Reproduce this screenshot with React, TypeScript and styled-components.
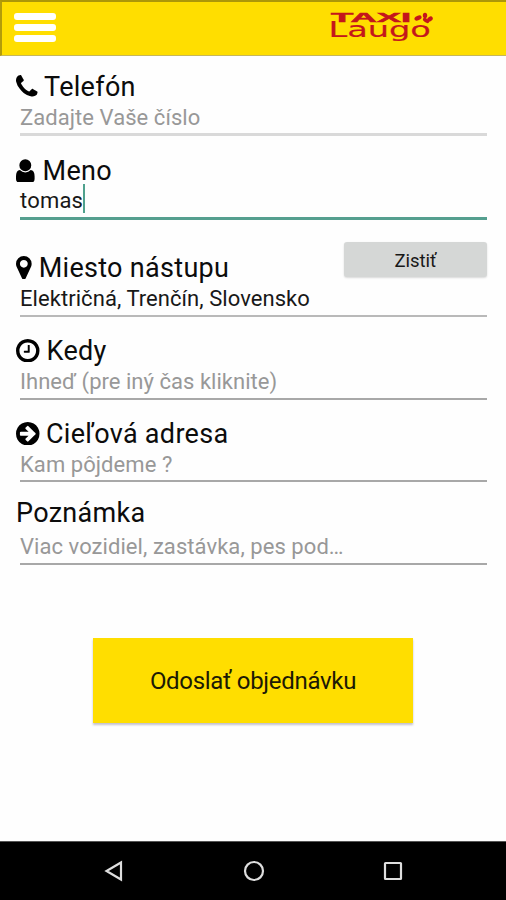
import React from "react";
import styled, { createGlobalStyle } from "styled-components";

const GlobalStyle = createGlobalStyle`
  * { box-sizing: border-box; }
  body { margin: 0; background: #fefefe; }
`;

const Screen = styled.div`
  width: 506px;
  height: 900px;
  display: flex;
  flex-direction: column;
  overflow: hidden;
  background: #fefefe;
  color: #0c0c0c;
  font-family: Roboto, "Liberation Sans", sans-serif;
`;

const TopBar = styled.header`
  height: 56px;
  flex: none;
  display: flex;
  justify-content: space-between;
  align-items: flex-start;
  padding: 9px 71px 0 12px;
  background: #ffde00;
  border-top: 2px solid #ad9708;
  border-left: 2px solid #b39c0a;
  border-bottom: 1px solid #c5b75c;
`;

const MenuButton = styled.button`
  width: 42px;
  height: 34px;
  padding: 2px 0 0;
  border: 0;
  background: none;
  display: flex;
  flex-direction: column;
  gap: 4px;
`;

const MenuBar = styled.span`
  width: 42px;
  height: 7px;
  border-radius: 3px;
  background: #fff;
`;

const Logo = styled.svg`
  width: 106px;
  height: 36px;
  display: block;
`;

const Form = styled.form`
  flex: 1;
  display: flex;
  flex-direction: column;
  padding: 15px 19px 0 16px;
`;

const Field = styled.section<{ $height: number }>`
  height: ${(p) => p.$height}px;
  flex: none;
`;

const LabelRow = styled.div`
  display: flex;
  justify-content: space-between;
  height: 33px;
`;

const Label = styled.label<{ $gap: number }>`
  display: flex;
  align-items: center;
  gap: ${(p) => p.$gap}px;
  height: 32px;
  font-size: 27px;
  line-height: 32px;
  letter-spacing: 0.3px;
  white-space: nowrap;
`;

const LabelIcon = styled.svg`
  height: 23.5px;
  flex: none;
  display: block;
  margin-top: -1.5px;
  fill: #000;
`;

const Value = styled.div<{ $muted?: boolean; $line: string; $weight: number; $area: number; $spacing: number; $top: number }>`
  margin-left: 4px;
  display: flex;
  align-items: flex-start;
  height: ${(p) => p.$area + p.$weight}px;
  padding-top: ${(p) => p.$top}px;
  border-bottom: ${(p) => p.$weight}px solid ${(p) => p.$line};
  color: ${(p) => (p.$muted ? "#989898" : "#181818")};
  font-size: 22px;
  line-height: 26px;
  letter-spacing: ${(p) => p.$spacing}px;
  white-space: pre;
`;

const Caret = styled.span`
  width: 2px;
  height: 29px;
  margin-top: -4px;
  background: #4fa18d;
`;

const LocateButton = styled.button`
  width: 143px;
  height: 35px;
  margin-top: -10px;
  border: 0;
  border-radius: 3px;
  background: #d5d7d6;
  box-shadow: 0 1px 2px rgba(0, 0, 0, 0.15);
  color: #181818;
  font: 18.5px Roboto, sans-serif;
  padding: 2px 0 0;
`;

const SubmitButton = styled.button`
  width: 320px;
  height: 85px;
  margin: 73px 0 0 77px;
  border: 0;
  background: #ffde00;
  box-shadow: 0 2px 2px rgba(60, 50, 90, 0.3);
  color: #1c1a05;
  font: 24px Roboto, sans-serif;
  letter-spacing: -0.3px;
  padding: 1px 0 0;
`;

const NavBar = styled.nav`
  height: 59px;
  flex: none;
  display: flex;
  justify-content: space-between;
  align-items: center;
  padding: 0 101px 0 102px;
  background: #000;
  border-top: 1px solid #555;
`;

const NavIcon = styled.svg`
  width: 24px;
  height: 24px;
  fill: none;
  stroke: #dedede;
  stroke-width: 2.2;
`;

const icons = {
  phone: {
    box: "192 128 1408 1536",
    d: "M1600 1240q0 27-10 70.5t-21 68.5q-21 50-122 106-94 51-186 51-27 0-53-3.5t-57.5-12.5-47-14.5-55.5-20.5-49-18q-98-35-175-83-127-79-264-216t-216-264q-48-77-83-175-3-9-18-49t-20.5-55.5-14.5-47-12.5-57.5-3.5-53q0-92 51-186 56-101 106-122 25-11 68.5-21t70.5-10q14 0 21 3 18 6 53 76 11 19 30 54t35 63.5 31 53.5q3 4 17.5 25t21.5 35.5 7 28.5q0 20-28.5 50t-62 55-62 53-28.5 46q0 9 5 22.5t8.5 20.5 14 24 11.5 19q76 137 174 235t235 174q2 1 19 11.5t24 14 20.5 8.5 22.5 5q18 0 46-28.5t53-62 55-62 50-28.5q14 0 28.5 7t35.5 21.5 25 17.5q25 15 53.5 31t63.5 35 54 30q70 35 76 53 3 7 3 21z",
  },
  user: {
    box: "0 0 19 24",
    d: "M15.600 6.400A6.100 6.100 0 1 1 3.400 6.400A6.100 6.100 0 1 1 15.600 6.400ZM4 11.200Q6.200 13.700 9.500 13.700Q12.800 13.700 15 11.200Q19 11.800 19 17.500V20.500Q19 24 15.700 24H3.300Q0 24 0 20.500V17.500Q0 11.800 4 11.200Z",
  },
  marker: {
    box: "384 128 1024 1536",
    d: "M1152 640q0-106-75-181t-181-75-181 75-75 181 75 181 181 75 181-75 75-181zm256 0q0 109-33 179l-364 774q-16 33-47.5 52t-67.5 19-67.5-19-46.5-52l-365-774q-33-70-33-179 0-212 150-362t362-150 362 150 150 362z",
  },
  clock: {
    box: "128 128 1536 1536",
    d: "M1024 544v448q0 14-9 23t-23 9h-320q-14 0-23-9t-9-23v-64q0-14 9-23t23-9h224v-352q0-14 9-23t23-9h64q14 0 23 9t9 23zm416 352q0-148-73-273t-198-198-273-73-273 73-198 198-73 273 73 273 198 198 273 73 273-73 198-198 73-273zm224 0q0 209-103 385.5t-279.5 279.5-385.5 103-385.5-103-279.5-279.5-103-385.5 103-385.5 279.5-279.5 385.5-103 385.5 103 279.5 279.5 103 385.5z",
  },
  arrow: {
    box: "128 128 1536 1536",
    d: "M1413 896q0-27-18-45l-91-91-362-362q-18-18-45-18t-45 18l-91 91q-18 18-18 45t18 45l189 189h-502q-26 0-45 19t-19 45v128q0 26 19 45t45 19h502l-189 189q-19 19-19 45t19 45l91 91q18 18 45 18t45-18l362-362 91-91q18-18 18-45zm251 0q0 209-103 385.5t-279.5 279.5-385.5 103-385.5-103-279.5-279.5-103-385.5 103-385.5 279.5-279.5 385.5-103 385.5 103 279.5 279.5 103 385.5z",
  },
};

type FieldData = {
  label: string;
  icon?: keyof typeof icons;
  gap: number;
  text: string;
  spacing: number;
  muted?: boolean;
  caret?: boolean;
  locate?: boolean;
  line: string;
  weight: number;
  area: number;
  top: number;
  height: number;
};

const fields: FieldData[] = [
  { label: "Telefón", icon: "phone", gap: 6.5, text: "Zadajte Vaše číslo", spacing: 0.06, muted: true, line: "#d9d9d9", weight: 3, area: 29, top: 1, height: 84 },
  { label: "Meno", icon: "user", gap: 8, text: "tomas", spacing: 0.2, caret: true, line: "#559f8f", weight: 3, area: 29, top: 0, height: 97 },
  { label: "Miesto nástupu", icon: "marker", gap: 7, text: "Električná, Trenčín, Slovensko", spacing: 0.06, locate: true, line: "#b9b9b9", weight: 2, area: 30, top: 1, height: 83 },
  { label: "Kedy", icon: "clock", gap: 7, text: "Ihneď (pre iný čas kliknite)", spacing: 0.03, muted: true, line: "#a8a8a8", weight: 2, area: 30, top: 1, height: 83 },
  { label: "Cieľová adresa", icon: "arrow", gap: 6.5, text: "Kam pôjdeme ?", spacing: 0.06, muted: true, line: "#a8a8a8", weight: 2, area: 29, top: 1, height: 79 },
  { label: "Poznámka", gap: 0, text: "Viac vozidiel, zastávka, pes pod…", spacing: 0.06, muted: true, line: "#a8a8a8", weight: 2, area: 33, top: 4, height: 68 },
];

function TaxiLogo() {
  return (
    <Logo viewBox="0 0 106 36" role="img" aria-label="TAXI Laugo">
      <g fill="#c4161c">
        <text transform="translate(2 10.500) scale(2.800 1)" fontFamily="Liberation Sans" fontSize="13" fontWeight="bold" stroke="#c4161c" strokeWidth="0.5">TAXI</text>
        <text transform="translate(-0.500 25.800) scale(1.600 1)" fontFamily="DejaVu Sans" fontSize="21.500" textLength="64" lengthAdjust="spacingAndGlyphs" stroke="#c4161c" strokeWidth="0.2">Laugo</text>
        <ellipse cx="89" cy="7" rx="3.8" ry="2.2" transform="rotate(-25 89 7)" />
        <ellipse cx="96" cy="4.500" rx="2.2" ry="2.7" />
        <ellipse cx="101" cy="8" rx="3" ry="2.2" transform="rotate(-35 101 8)" />
        <ellipse cx="97" cy="9.500" rx="3.5" ry="1.9" transform="rotate(35 97 9.5)" />
      </g>
    </Logo>
  );
}

function FormField({ data }: { data: FieldData }) {
  const icon = data.icon && icons[data.icon];
  return (
    <Field $height={data.height}>
      <LabelRow>
        <Label $gap={data.gap}>
          {icon && (
            <LabelIcon viewBox={icon.box} aria-hidden="true">
              <path d={icon.d} />
            </LabelIcon>
          )}
          <span>{data.label}</span>
        </Label>
        {data.locate && <LocateButton type="button">Zistiť</LocateButton>}
      </LabelRow>
      <Value
        $muted={data.muted}
        $line={data.line}
        $weight={data.weight}
        $area={data.area}
        $top={data.top}
        $spacing={data.spacing}
      >
        <span>{data.text}</span>
        {data.caret && <Caret />}
      </Value>
    </Field>
  );
}

export default function App() {
  return (
    <>
      <GlobalStyle />
      <Screen>
        <TopBar>
          <MenuButton type="button" aria-label="Menu">
            <MenuBar />
            <MenuBar />
            <MenuBar />
          </MenuButton>
          <TaxiLogo />
        </TopBar>
        <Form>
          {fields.map((f) => (
            <FormField key={f.label} data={f} />
          ))}
          <SubmitButton type="button">Odoslať objednávku</SubmitButton>
        </Form>
        <NavBar>
          <NavIcon viewBox="0 0 24 24">
            <path d="M19 3.5V20.500L4.500 12Z" />
          </NavIcon>
          <NavIcon viewBox="0 0 24 24">
            <circle cx="12" cy="12" r="9" />
          </NavIcon>
          <NavIcon viewBox="0 0 24 24">
            <rect x="4" y="4" width="16" height="16" rx="0.5" />
          </NavIcon>
        </NavBar>
      </Screen>
    </>
  );
}
